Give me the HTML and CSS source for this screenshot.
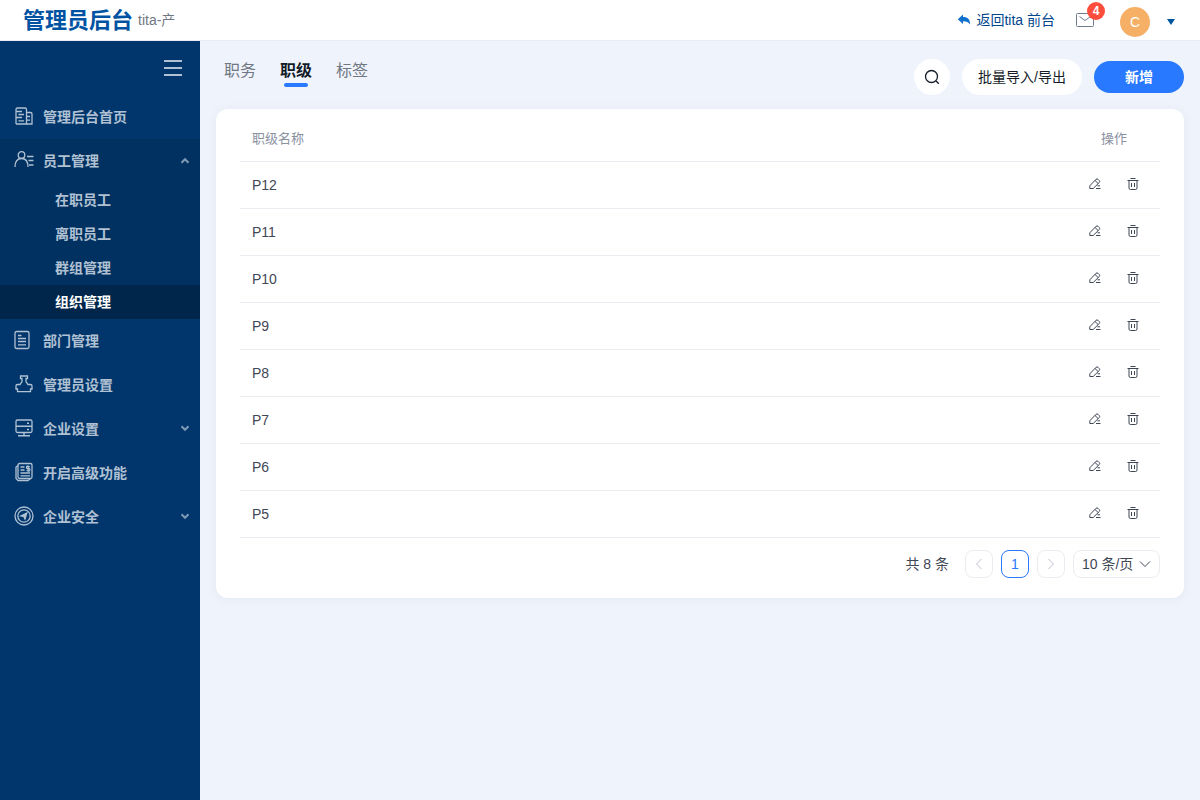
FILE: index.html
```html
<!DOCTYPE html>
<html lang="zh-CN">
<head>
<meta charset="utf-8">
<meta name="viewport" content="width=device-width, initial-scale=1">
<title>管理员后台</title>
<link rel="stylesheet" href="styles.css">
</head>
<body>
<svg class="sprite" aria-hidden="true">
  <symbol id="edit" viewBox="0 0 12 12"><path d="M.8 10.500V7.800L7 1.300Q8 .5 9 1.300L10.300 2.600Q11.200 3.500 10.300 4.500L4.200 10.500ZM6 2.500 9 5.400M8.500 7.800H11M7 10.500H11.500"/></symbol>
  <symbol id="trash" viewBox="0 0 12 12"><path d="M.5 2.500H11.500M3.500 .5H8.500M2 2.500V10Q2 11.500 3.500 11.500H8.500Q10 11.500 10 10V2.500M4.500 5V9M7.500 5V9"/></symbol>
  <symbol id="down" viewBox="0 0 10 10"><path d="M1.500 3.200 5 6.800 8.500 3.200"/></symbol>
</svg>
<header class="topbar">
  <h1 class="brand">管理员后台</h1>
  <span class="tenant">tita-产</span>
  <div class="topbar-right">
    <a class="back" href="#"><svg width="14" height="12" viewBox="0 0 14 12"><path d="M6 .5V3C11 3 13.300 5.500 13 10.500 11.500 8.200 9.500 7.300 6 7.300V10L.8 5.200Z" fill="#1170cc"/></svg>返回tita 前台</a>
    <button class="mail" aria-label="消息"><svg width="20" height="16" viewBox="0 0 20 16"><rect x="1.500" y="1.500" width="17" height="13" rx="1"/><path d="M4.500 4.500 10 8.500 15.500 4.500"/></svg><span class="badge">4</span></button>
    <span class="avatar">C</span>
    <button class="caret" aria-label="账户菜单"><svg width="8" height="6" viewBox="0 0 8 6"><path d="M0 0H8L4 6Z" fill="#00569e"/></svg></button>
  </div>
</header>
<div class="shell">
  <nav class="sidebar">
    <div class="fold"><button aria-label="收起菜单"><svg width="18" height="18" viewBox="0 0 18 18"><path d="M0 2H18M0 9H18M0 16H18"/></svg></button></div>
    <a class="item" href="#"><svg class="ico" viewBox="0 0 20 20"><path d="M2 18V3.500Q2 2 3.500 2H11Q12.500 2 12.500 3.500V18M12.500 6.500H16.500Q18 6.500 18 8V18H2M2 5.500H8M4.500 8.500H10M2 11.500H8M4.500 14.800H10M12.500 10.500H16M12.500 14.200H16"/></svg>管理后台首页</a>
    <div class="group">
      <a class="item" href="#"><svg class="ico" viewBox="0 0 20 20"><circle cx="7.500" cy="5" r="3.300"/><path d="M1 17Q1 8.500 7.500 8.500T14 17M13 6.500H19.500M14.500 10.500H19.500M15 15H19.500"/></svg>员工管理<svg class="arrow up"><use href="#down"/></svg></a>
      <a class="sub" href="#">在职员工</a>
      <a class="sub" href="#">离职员工</a>
      <a class="sub" href="#">群组管理</a>
      <a class="sub active" href="#">组织管理</a>
    </div>
    <a class="item" href="#"><svg class="ico" viewBox="0 0 20 20"><rect x="1" y="1.500" width="14" height="17" rx="1.500"/><path d="M4 5.500H7.500M4 8.500H12M4 11.500H12M4 14.800H12"/></svg>部门管理</a>
    <a class="item" href="#"><svg class="ico" viewBox="0 0 20 20"><path d="M6.500 2H13.500V4.500H12V7.500L14 10.500H16.500Q18 10.500 18 12V15H16.500V17.700H3.500V15H2V12Q2 10.500 3.500 10.500H6L8 7.500V4.500H6.500Z"/></svg>管理员设置</a>
    <a class="item" href="#"><svg class="ico" viewBox="0 0 20 20"><rect x="2" y="2" width="16" height="12.500" rx="1.500"/><path d="M2 8.200H18M10 14.500V17.500M4 17.700H16M13 5.200H15M13 11.400H15" stroke-width="1.500"/></svg>企业设置<svg class="arrow"><use href="#down"/></svg></a>
    <a class="item" href="#"><svg class="ico" viewBox="0 0 20 20"><path d="M4 3.500 2 5V16.500L4 18.500H14L16.500 16.500"/><rect x="4" y="1.500" width="14" height="15" rx="1.500"/><path d="M6.500 5H10.500M6.500 8H10.500M6.500 11H16M6.500 13.800H16M15.800 4.800Q12.500 3.500 12.500 5.200T14.200 6.500T15.800 8T12.500 8.500M14.200 3.500V9.500"/></svg>开启高级功能</a>
    <a class="item" href="#"><svg class="ico" viewBox="0 0 20 20"><circle cx="10" cy="10" r="9"/><circle cx="10" cy="10" r="6.200"/><path d="M12.800 7 7 10 9.800 10.400 11 13Z" fill="currentColor"/></svg>企业安全<svg class="arrow"><use href="#down"/></svg></a>
  </nav>
  <main class="main">
    <div class="toolbar">
      <div class="tabs"><button class="tab">职务</button><button class="tab current">职级</button><button class="tab">标签</button></div>
      <div class="actions">
        <button class="search" aria-label="搜索"><svg width="16" height="16" viewBox="0 0 16 16"><circle cx="7.500" cy="7.500" r="6"/><path d="M12 12 14.800 14.800"/></svg></button>
        <button class="pill">批量导入/导出</button>
        <button class="primary">新增</button>
      </div>
    </div>
    <section class="card">
      <table>
        <thead><tr><th>职级名称</th><th class="ops">操作</th></tr></thead>
        <tbody>
          <tr><td>P12</td><td class="ops"><button aria-label="编辑 P12"><svg><use href="#edit"/></svg></button><button aria-label="删除 P12"><svg><use href="#trash"/></svg></button></td></tr>
          <tr><td>P11</td><td class="ops"><button aria-label="编辑 P11"><svg><use href="#edit"/></svg></button><button aria-label="删除 P11"><svg><use href="#trash"/></svg></button></td></tr>
          <tr><td>P10</td><td class="ops"><button aria-label="编辑 P10"><svg><use href="#edit"/></svg></button><button aria-label="删除 P10"><svg><use href="#trash"/></svg></button></td></tr>
          <tr><td>P9</td><td class="ops"><button aria-label="编辑 P9"><svg><use href="#edit"/></svg></button><button aria-label="删除 P9"><svg><use href="#trash"/></svg></button></td></tr>
          <tr><td>P8</td><td class="ops"><button aria-label="编辑 P8"><svg><use href="#edit"/></svg></button><button aria-label="删除 P8"><svg><use href="#trash"/></svg></button></td></tr>
          <tr><td>P7</td><td class="ops"><button aria-label="编辑 P7"><svg><use href="#edit"/></svg></button><button aria-label="删除 P7"><svg><use href="#trash"/></svg></button></td></tr>
          <tr><td>P6</td><td class="ops"><button aria-label="编辑 P6"><svg><use href="#edit"/></svg></button><button aria-label="删除 P6"><svg><use href="#trash"/></svg></button></td></tr>
          <tr><td>P5</td><td class="ops"><button aria-label="编辑 P5"><svg><use href="#edit"/></svg></button><button aria-label="删除 P5"><svg><use href="#trash"/></svg></button></td></tr>
        </tbody>
      </table>
      <div class="pager">
        <span class="total">共 8 条</span>
        <button class="page" aria-label="上一页" disabled><svg width="8" height="12" viewBox="0 0 8 12"><path d="M6.500 1 1.500 6 6.500 11"/></svg></button>
        <button class="page on">1</button>
        <button class="page" aria-label="下一页" disabled><svg width="8" height="12" viewBox="0 0 8 12"><path d="M1.500 1 6.500 6 1.500 11"/></svg></button>
        <div class="size"><select aria-label="每页条数"><option>10 条/页</option><option>20 条/页</option></select><svg width="12" height="8" viewBox="0 0 12 8"><path d="M1 1.500 6 6.500 11 1.500"/></svg></div>
      </div>
    </section>
  </main>
</div>
</body>
</html>
```
FILE: styles.css
```css
* { box-sizing: border-box; }
body {
  margin: 0;
  min-height: 100vh;
  display: flex;
  flex-direction: column;
  background: #eff3fb;
  color: #3f4755;
  font: 14px/20px "Liberation Sans", "Noto Sans CJK SC", sans-serif;
}
button, select { font: inherit; color: inherit; border: 0; background: none; padding: 0; cursor: pointer; }
a { color: inherit; text-decoration: none; }
svg { display: block; flex: none; fill: none; stroke: currentColor; }
.sprite { position: absolute; width: 0; height: 0; }

.topbar {
  height: 41px;
  display: flex;
  align-items: center;
  padding: 0 25px 0 23px;
  background: #fff;
  border-bottom: 1px solid #e9edf3;
}
.brand { margin: 0; padding-top: 2px; font-size: 22px; line-height: 32px; font-weight: 700; color: #0052a3; }
.tenant { margin-left: 5px; color: #6f7782; }
.topbar-right { margin-left: auto; display: flex; align-items: center; }
.back { display: flex; align-items: center; gap: 5px; color: #00468c; }
.back svg, .caret svg { stroke: none; }
.mail { position: relative; margin-left: 20px; color: #6f7b8c; }
.badge {
  position: absolute;
  left: 12px;
  top: -10px;
  width: 18px;
  height: 18px;
  border-radius: 50%;
  background: #ff4d3d;
  color: #fff;
  font-size: 12px;
  line-height: 18px;
  font-weight: 700;
}
.avatar {
  width: 30px;
  height: 30px;
  margin: 3px 17px 0 25px;
  border-radius: 50%;
  background: #f5b066;
  color: #fff;
  line-height: 30px;
  text-align: center;
}
.caret { margin-top: 4px; }

.shell { flex: 1; display: flex; }
.sidebar { width: 200px; flex: none; background: #00366c; color: #b0c1d3; font-weight: 700; }
.fold { display: flex; justify-content: flex-end; height: 54px; padding: 18px 18px 0 0; }
.fold button { height: 18px; }
.fold path { stroke-width: 2; }
.item { display: flex; align-items: center; height: 44px; padding: 0 10px 0 14px; }
.ico { width: 20px; height: 20px; margin: 0 9px 2px 0; stroke-width: 1.3; }
.arrow { width: 10px; height: 10px; margin-left: auto; margin-bottom: 2px; color: #7f9ab6; stroke-width: 2; }
.up { margin-bottom: 0; transform: rotate(180deg); }
.group { background: #003160; }
.sub { display: block; padding-left: 55px; line-height: 34px; }
.active { background: #00264b; color: #fff; }

.main { flex: 1; min-width: 0; padding: 18px 16px; }
.toolbar { display: flex; justify-content: space-between; margin-bottom: 14px; }
.tabs { display: flex; align-items: flex-start; gap: 24px; padding-left: 8px; font-size: 16px; line-height: 24px; color: #6f7782; }
.tab { display: flex; flex-direction: column; align-items: center; }
.current { color: #141c28; font-weight: 700; }
.current::after { content: ""; width: 24px; height: 4px; border-radius: 2px; background: #2879ff; }
.actions { display: flex; align-items: center; gap: 12px; }
.search { display: grid; place-items: center; width: 36px; height: 36px; border-radius: 50%; background: #fff; color: #141c28; }
.search svg { stroke-width: 1.3; }
.pill { height: 36px; padding: 0 16px; border-radius: 18px; background: #fff; color: #141c28; }
.primary { width: 90px; height: 32px; border-radius: 16px; background: #2879ff; color: #fff; font-weight: 700; }

.card { padding: 6px 24px 20px; border-radius: 12px; background: #fff; box-shadow: 0 1px 8px #7890b41a; }
table { width: 100%; border-collapse: collapse; }
th, td { height: 47px; padding: 0 12px; border-bottom: 1px solid #e9ecf0; text-align: left; }
th { height: 46px; padding-top: 2px; font-size: 13px; font-weight: 400; color: #89919f; }
.ops { width: 92px; text-align: center; }
td.ops { padding: 0 20px 2px; line-height: 12px; }
td button { display: inline-block; vertical-align: top; color: #3f4755; }
td button + button { margin-left: 26px; }
td svg { width: 12px; height: 12px; }

.pager { display: flex; justify-content: flex-end; align-items: center; gap: 8px; padding-top: 12px; }
.total { margin-right: 8px; }
.page { display: grid; place-items: center; width: 28px; height: 28px; border: 1px solid #e9ecf0; border-radius: 8px; color: #bfc4d0; }
.on { border-color: #2879ff; color: #2879ff; }
.size { display: grid; align-items: center; height: 28px; border: 1px solid #e9ecf0; border-radius: 8px; }
.size select, .size svg { grid-area: 1 / 1; }
.size select { appearance: none; height: 26px; padding: 0 25px 0 8px; border-radius: 8px; }
.size svg { justify-self: end; margin-right: 8px; pointer-events: none; }
```
